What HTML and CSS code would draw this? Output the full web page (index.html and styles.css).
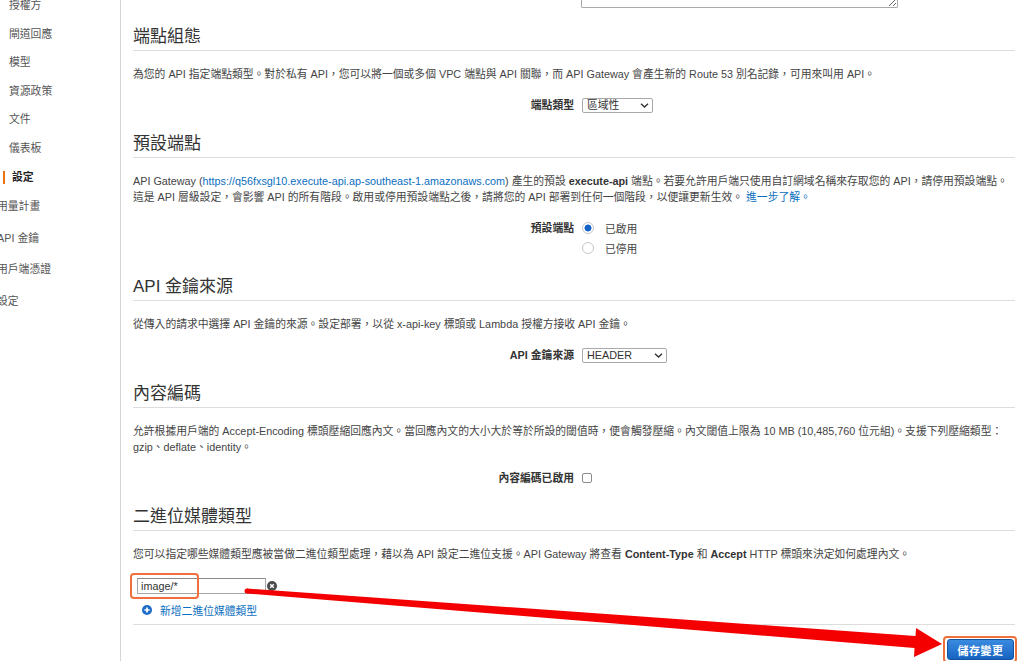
FILE: index.html
```html
<!DOCTYPE html>
<html lang="zh-TW">
<head>
  <meta charset="UTF-8">
  <title>設定 - API Gateway</title>
  <link rel="stylesheet" href="styles.css">
</head>
<body>
  <div class="page">
    <nav class="side">
      <ul>
        <li class="sub">授權方</li>
        <li class="sub">閘道回應</li>
        <li class="sub">模型</li>
        <li class="sub">資源政策</li>
        <li class="sub">文件</li>
        <li class="sub">儀表板</li>
        <li class="sub active">設定</li>
        <li class="top">用量計畫</li>
        <li class="top">API 金鑰</li>
        <li class="top">用戶端憑證</li>
        <li class="top">設定</li>
      </ul>
    </nav>

    <main class="content">
      <div class="form-row first">
        <div class="label"></div>
        <div class="ctrl"><textarea class="desc-input"></textarea></div>
      </div>

      <section class="sec">
        <h2>端點組態</h2>
        <p>為您的 API 指定端點類型。對於私有 API，您可以將一個或多個 VPC 端點與 API 關聯，而 API Gateway 會產生新的 Route 53 別名記錄，可用來叫用 API。</p>
        <div class="form-row">
          <label class="label">端點類型</label>
          <div class="ctrl">
            <span class="select">
              <select class="w-71"><option>區域性</option></select>
              <svg width="9" height="5" viewBox="0 0 9 5"><polyline points="1,0.8 4.5,4 8,0.8" fill="none" stroke="#333" stroke-width="1.4"/></svg>
            </span>
          </div>
        </div>
      </section>

      <section class="sec">
        <h2>預設端點</h2>
        <p>API Gateway (<a href="#">https://q56fxsgl10.execute-api.ap-southeast-1.amazonaws.com</a>) 產生的預設 <b>execute-api</b> 端點。若要允許用戶端只使用自訂網域名稱來存取您的 API，請停用預設端點。這是 API 層級設定，會影響 API 的所有階段。啟用或停用預設端點之後，請將您的 API 部署到任何一個階段，以便讓更新生效。 <a href="#">進一步了解。</a></p>
        <div class="form-row top-align">
          <label class="label">預設端點</label>
          <div class="ctrl radios">
            <label class="radio"><input type="radio" name="ep" checked> 已啟用</label>
            <label class="radio"><input type="radio" name="ep"> 已停用</label>
          </div>
        </div>
      </section>

      <section class="sec">
        <h2>API 金鑰來源</h2>
        <p>從傳入的請求中選擇 API 金鑰的來源。設定部署，以從 x-api-key 標頭或 Lambda 授權方接收 API 金鑰。</p>
        <div class="form-row">
          <label class="label">API 金鑰來源</label>
          <div class="ctrl">
            <span class="select">
              <select class="w-85"><option>HEADER</option></select>
              <svg width="9" height="5" viewBox="0 0 9 5"><polyline points="1,0.8 4.5,4 8,0.8" fill="none" stroke="#333" stroke-width="1.4"/></svg>
            </span>
          </div>
        </div>
      </section>

      <section class="sec">
        <h2>內容編碼</h2>
        <p>允許根據用戶端的 Accept-Encoding 標頭壓縮回應內文。當回應內文的大小大於等於所設的閾值時，便會觸發壓縮。內文閾值上限為 10 MB (10,485,760 位元組)。支援下列壓縮類型：gzip、deflate、identity。</p>
        <div class="form-row">
          <label class="label">內容編碼已啟用</label>
          <div class="ctrl"><input type="checkbox" class="check"></div>
        </div>
      </section>

      <section class="sec">
        <h2>二進位媒體類型</h2>
        <p>您可以指定哪些媒體類型應被當做二進位類型處理，藉以為 API 設定二進位支援。API Gateway 將查看 <b>Content-Type</b> 和 <b>Accept</b> HTTP 標頭來決定如何處理內文。</p>
        <div class="media-list">
          <div class="media-item">
            <span class="mark"></span>
            <input type="text" class="text-input" value="image/*">
            <svg class="clear" width="10" height="10" viewBox="0 0 10 10">
              <circle cx="5" cy="5" r="5" fill="#4a4a4a"/>
              <path d="M3.2 3.2L6.8 6.8M6.8 3.2L3.2 6.8" stroke="#fff" stroke-width="1.4"/>
            </svg>
          </div>
          <a href="#" class="add-link">
            <svg width="10" height="10" viewBox="0 0 10 10">
              <circle cx="5" cy="5" r="5" fill="#1d6cc8"/>
              <path d="M2.4 5H7.6M5 2.4V7.6" stroke="#fff" stroke-width="1.7"/>
            </svg>
            新增二進位媒體類型
          </a>
        </div>
      </section>

      <div class="actions">
        <span class="hl"><button class="save">儲存變更</button></span>
      </div>
    </main>

    <svg class="arrow" width="1024" height="661" viewBox="0 0 1024 661">
      <circle cx="247" cy="591" r="2.5" fill="#f40000"/>
      <polygon points="247,588.5 915.5,636 916,628 942,644 914,657 914.5,648 247,593.5" fill="#f40000"/>
    </svg>
  </div>
</body>
</html>
```

FILE: styles.css
```css
* { box-sizing: border-box; }
html, body { margin: 0; height: 100%; }
body { font-family: "Liberation Sans", "Noto Sans CJK TC", sans-serif; font-size: 10.8px; color: #444; background: #fff; overflow: hidden; }
a { color: #0b6fc0; text-decoration: none; }
b { color: #333; }

.page { position: relative; display: flex; height: 661px; overflow: hidden; }

/* left nav */
.side { width: 121px; flex: none; border-right: 1px solid #d5d5d5; }
.side ul { list-style: none; margin: -9px 0 0; padding: 0; }
.side li { white-space: nowrap; color: #555; }
.side .sub { line-height: 28.6px; padding-left: 9px; }
.side .active { position: relative; padding-left: 12px; color: #222; font-weight: bold; }
.side .active::before { content: ""; position: absolute; left: 3px; top: 8px; width: 2px; height: 13px; background: #ec7211; }
.side .top { line-height: 31.6px; margin-left: -3px; }

/* main column */
.content { flex: 1; min-width: 0; padding: 0 9px 0 12px; }
.sec { padding-top: 19px; }
.sec h2 { margin: 0; padding-bottom: 3px; border-bottom: 1px solid #ddd; font-size: 17px; font-weight: normal; line-height: 20px; color: #333; }
.sec p { margin: 15px 0 0; line-height: 16px; }

.form-row { display: grid; grid-template-columns: 50% 1fr; column-gap: 7px; align-items: center; min-height: 20px; margin-top: 13px; }
.form-row.first { margin-top: -52px; }
.form-row.top-align { align-items: start; }
.label { text-align: right; font-weight: bold; color: #333; line-height: 20px; }

.desc-input { display: block; width: 317px; height: 60px; border: 1px solid #aaa; border-radius: 1px; }

.select { position: relative; display: inline-block; vertical-align: middle; }
.select select { -webkit-appearance: none; appearance: none; display: block; height: 15px; margin: 0 0 0 1px; padding: 0 16px 0 4px; border: 1px solid #a9a9a9; border-radius: 2px; background: #fff; font: 10.8px "Liberation Sans", "Noto Sans CJK TC", sans-serif; color: #333; line-height: 13px; }
.select svg { position: absolute; right: 4px; top: 5px; pointer-events: none; }
.w-71 { width: 71px; }
.w-85 { width: 85px; }

.radios { display: flex; flex-direction: column; }
.radio { display: flex; align-items: center; gap: 11px; height: 20px; color: #444; }
.radio input { -webkit-appearance: none; appearance: none; width: 12px; height: 12px; margin: 0 0 0 1px; border: 1px solid #c6c6c6; border-radius: 50%; background: #fff; }
.radio input:checked { background: radial-gradient(circle, #1463c9 3.2px, #fff 3.8px); }

.check { -webkit-appearance: none; appearance: none; display: block; width: 10px; height: 10px; margin: 0 0 0 1px; border: 1px solid #8c8c8c; border-radius: 2px; background: #fff; }

/* binary media types */
.media-list { margin-top: 14px; padding: 0 0 4px 4px; border-bottom: 1px solid #ddd; }
.media-item { position: relative; display: flex; align-items: center; height: 20px; }
.text-input { width: 129px; height: 16px; padding: 0 3px; border: 1px solid #a5a5a5; border-top-color: #8a8a8a; border-radius: 0; font: 10.8px "Liberation Sans", "Noto Sans CJK TC", sans-serif; color: #333; }
.clear { margin-left: 1px; }
.mark { position: absolute; left: -7px; top: -3px; width: 69px; height: 26px; border: 2px solid #f0703c; border-radius: 4px; }
.add-link { display: flex; align-items: center; gap: 8px; height: 20px; margin-top: 4px; padding-left: 5px; }

.actions { display: flex; justify-content: flex-end; padding: 14px 1px 0 0; }
.hl { position: relative; display: inline-block; }
.hl::after { content: ""; position: absolute; left: -4px; top: -3px; right: -3px; bottom: -3px; border: 2px solid #f0703c; border-radius: 4px; }
.save { display: block; width: 67px; height: 21px; padding: 0; border: 1px solid #14549f; border-radius: 3px; background: linear-gradient(#3a8be0, #1663c2); color: #fff; font: bold 11px "Liberation Sans", "Noto Sans CJK TC", sans-serif; letter-spacing: 0.5px; }

.arrow { position: absolute; top: 0; left: 0; pointer-events: none; }
```
